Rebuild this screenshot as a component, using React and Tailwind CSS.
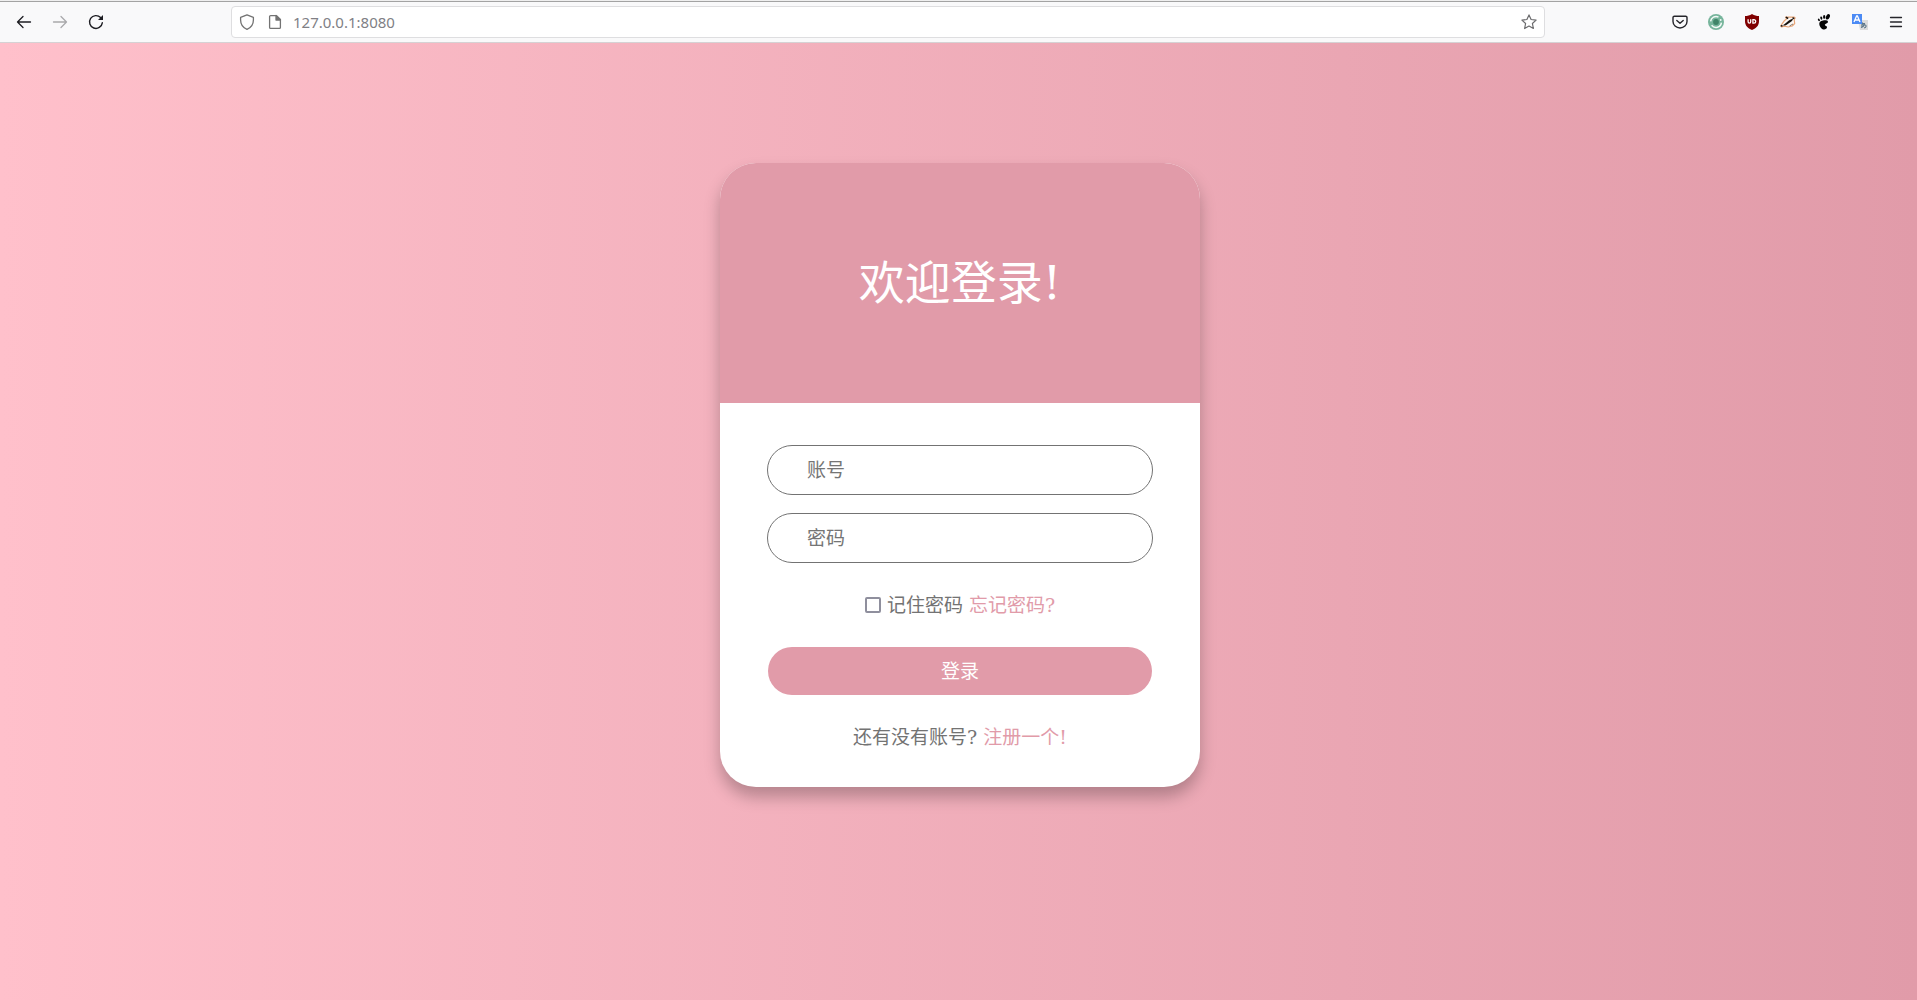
import React from "react";

const iconBtn = "flex size-9 items-center justify-center";

function BackIcon() {
  return (
    <svg width="16" height="16" viewBox="0 0 16 16" fill="none" stroke="#1d1d22" strokeWidth="1.3" strokeLinecap="round" strokeLinejoin="round">
      <path d="M14.5 8H1.500M7 2.500L1.500 8L7 13.500" />
    </svg>
  );
}

function ForwardIcon() {
  return (
    <svg width="16" height="16" viewBox="0 0 16 16" fill="none" stroke="#a9a9ab" strokeWidth="1.3" strokeLinecap="round" strokeLinejoin="round">
      <path d="M1.500 8H14.500M9 2.500L14.500 8L9 13.500" />
    </svg>
  );
}

function ReloadIcon() {
  return (
    <svg width="16" height="16" viewBox="0 0 16 16" fill="none" stroke="#1d1d22" strokeWidth="1.4" strokeLinecap="round">
      <path d="M14.300 8.800A6.400 6.400 0 1 1 12.600 3.600" />
      <path d="M15 1v5h-5z" fill="#1d1d22" stroke="none" />
    </svg>
  );
}

function ShieldIcon() {
  return (
    <svg width="16" height="16" viewBox="0 0 16 16" fill="none" stroke="#737373" strokeWidth="1.3" strokeLinejoin="round">
      <path d="M8 .8 1.600 3.300v2.600C1.600 10.500 4 13.600 8 15.300c4-1.700 6.400-4.800 6.400-9.400V3.300z" />
    </svg>
  );
}

function PageIcon() {
  return (
    <svg width="16" height="16" viewBox="0 0 16 16" fill="none" stroke="#737373" strokeWidth="1.3" strokeLinejoin="round">
      <path d="M9.500 1.600H3.600a1 1 0 0 0-1 1v10.800a1 1 0 0 0 1 1h8.800a1 1 0 0 0 1-1V5.500z" />
      <path d="M9 1.500V6h4.500z" fill="#737373" />
    </svg>
  );
}

function StarIcon() {
  return (
    <svg width="16" height="16" viewBox="0 0 16 16" fill="none" stroke="#6b6b6d" strokeWidth="1.2" strokeLinejoin="round">
      <path d="M8 .9l2.100 4.600 5 .6-3.700 3.400 1 5L8 12l-4.400 2.500 1-5L.9 6.100l5-.6z" />
    </svg>
  );
}

function PocketIcon() {
  return (
    <svg width="16" height="16" viewBox="0 0 16 16" fill="none" stroke="#26262b" strokeWidth="1.4" strokeLinecap="round" strokeLinejoin="round">
      <path d="M2.400 2.200h11.200a1.400 1.400 0 0 1 1.400 1.400v3.900a7 6.500 0 0 1-14 0V3.600a1.400 1.400 0 0 1 1.400-1.400z" />
      <path d="M4.800 6.400L8 9.300l3.200-2.900" />
    </svg>
  );
}

function OrbitIcon() {
  return (
    <svg width="16" height="16" viewBox="0 0 16 16">
      <circle cx="8" cy="8" r="8" fill="#77b59c" />
      <path d="M2.600 7.400A5.500 5.500 0 0 1 10.500 3.100M13.400 8.600A5.500 5.500 0 0 1 3.600 11.300" fill="none" stroke="#f4faf7" strokeWidth="1.500" />
      <circle cx="12.600" cy="6" r="1" fill="#f4faf7" />
      <circle cx="8" cy="8" r="4" fill="#77b59c" />
      <circle cx="8" cy="8" r="2.900" fill="#3f8468" />
    </svg>
  );
}

function BlockerIcon() {
  return (
    <svg width="16" height="16" viewBox="0 0 16 16" fill="none">
      <path d="M8 0c2.400 1.500 4.500 2 7 2v5c0 4.600-2.600 7.200-7 9C3.600 14.200 1 11.600 1 7V2c2.500 0 4.600-.5 7-2z" fill="#800000" />
      <path d="M4.100 5.300v2.500a1.300 1.300 0 0 0 2.600 0V5.300M8.900 5.700v3.400h1.100a1.700 1.700 0 0 0 0-3.400z" stroke="#fff" strokeWidth="1.300" />
    </svg>
  );
}

function BadgerIcon() {
  return (
    <svg width="16" height="16" viewBox="0 0 16 16" fill="none">
      <path d="M.8 11.800C2.500 9.500 3.500 6.500 6.500 5L5.700 3l3.600.2 4.700-.2 1.200 1-1 1.500.5 4-2.500 2.500-4 1-3.500-.8-3.200.6z" fill="#fbf8f5" stroke="#e9a678" strokeWidth="1.200" strokeLinejoin="round" />
      <path d="M2 11.300C4.500 10.800 6 8.700 8.500 6.700c1.700-1.200 3-1.700 4.500-1.700-.5 2-2 3-3.500 3.700-1.500.8-2.500 2.300-4.500 2.800z" fill="#17130f" />
      <path d="M5.800 3.200l2.400 1.300M12.500 3.800l1.800.8M.8 11.700l1.700.2" stroke="#17130f" strokeWidth="1.500" />
      <path d="M9.500 12c1-.3 2-1.500 3.500-2" stroke="#8a7b70" strokeWidth="1" />
    </svg>
  );
}

function FootIcon() {
  return (
    <svg width="16" height="16" viewBox="0 0 16 16" fill="#050505">
      <ellipse cx="11.900" cy="2.800" rx="1.800" ry="2.900" transform="rotate(25 11.900 2.800)" />
      <ellipse cx="8.200" cy="2.900" rx="1.150" ry="1.900" />
      <ellipse cx="5.300" cy="4.100" rx="1" ry="1.600" transform="rotate(-15 5.300 4.100)" />
      <ellipse cx="2.900" cy="5.900" rx=".9" ry="1.400" transform="rotate(-30 2.900 5.900)" />
      <path d="M3.300 9.500C3.500 7 7 6 9.700 6.200c2.300.2 3 1.700 1.600 2.800-1.300 1-2.600 1-2.500 2 .1 1 2.300.6 2.200 2.300-.1 1.500-1.800 2.500-3.500 2.200-2.400-.5-4.300-3.500-4.200-6z" />
    </svg>
  );
}

function TranslateIcon() {
  return (
    <svg width="16" height="16" viewBox="0 0 16 16" fill="none">
      <path d="M6 6h10v10H8z" fill="#dcdcdc" />
      <path d="M8 9.500h5M10 8v5.500M12.500 9c0 3-2 4.500-3.500 4.300M9.500 11.500c2-1.500 4.800-.8 4.600.8-.1 1-1 1.500-2 1.500" stroke="#60798b" strokeWidth="1.200" />
      <path d="M0 0h10v10H0z" fill="#4c8bf5" />
      <path d="M2 8l2.600-6h.8L8 8M3 6h4" stroke="#fff" strokeWidth="1.300" />
    </svg>
  );
}

function MenuIcon() {
  return (
    <svg width="16" height="16" viewBox="0 0 16 16" stroke="#26262b" strokeWidth="1.300" strokeLinecap="round">
      <path d="M2.500 3.500h11M2.500 8h11M2.500 12.500h11" />
    </svg>
  );
}

const extensions = [
  ["Pocket", PocketIcon],
  ["Orbit", OrbitIcon],
  ["Content blocker", BlockerIcon],
  ["Badger", BadgerIcon],
  ["GNOME", FootIcon],
  ["Translate", TranslateIcon],
];

function BrowserBar() {
  return (
    <header className="flex h-[42px] shrink-0 items-center border-t border-b border-t-[#a3a3a3] border-b-[#d5d2d4] bg-[#f9f9fa] pr-[3px] pl-1.5 font-['Noto_Sans',sans-serif]">
      <button aria-label="Back" className={iconBtn}><BackIcon /></button>
      <button aria-label="Forward" className={iconBtn}><ForwardIcon /></button>
      <button aria-label="Reload" className={iconBtn}><ReloadIcon /></button>
      <div className="mx-[117px] flex h-8 grow items-center rounded border border-[#dedee0] bg-white px-[7px]">
        <ShieldIcon />
        <span className="ml-3"><PageIcon /></span>
        <input aria-label="Address" defaultValue="127.0.0.1:8080" className="ml-2.5 min-w-0 grow bg-transparent text-[15px] text-[#808085] outline-none" />
        <button aria-label="Bookmark"><StarIcon /></button>
      </div>
      {extensions.map(([name, Icon]) => (
        <button key={name} aria-label={name} className={iconBtn}><Icon /></button>
      ))}
      <button aria-label="Menu" className={iconBtn}><MenuIcon /></button>
    </header>
  );
}

const field =
  "h-[50px] w-full rounded-full border border-[#737373] bg-white px-[39px] text-[19px] text-[#737373] placeholder:text-[#757575] outline-none";

export default function App() {
  return (
    <div className="flex min-h-screen flex-col bg-white font-['DejaVu_Serif','Noto_Sans_CJK_SC',serif]">
      <div className="h-px bg-[#efefef]" />
      <BrowserBar />
      <main className="flex grow flex-col items-center bg-linear-to-r from-[#ffc0cb] to-[#e19ba9] pt-[120px] pl-[3px]">
        <section className="w-[480px] overflow-hidden rounded-[36px] bg-white text-[19px] text-[#737373] shadow-[0_10px_16px_0_rgba(0,0,0,0.25)]">
          <div className="flex h-60 items-center justify-center bg-[#e19ba9]">
            <h1 className="text-[46px] leading-none text-white">欢迎登录!</h1>
          </div>
          <form className="flex flex-col items-center px-[47px] pt-[42px] pb-9" onSubmit={(e) => e.preventDefault()}>
            <input aria-label="账号" placeholder="账号" className={field} />
            <input aria-label="密码" type="password" placeholder="密码" className={field + " mt-[18px]"} />
            <div className="mt-7 flex h-7 items-center">
              <label className="flex items-center">
                <input type="checkbox" className="mr-1.5 size-4 appearance-none rounded-xs border-2 border-[#8f8f9d] bg-white" />
                记住密码
              </label>
              <a href="#forgot" className="ml-1.5 text-[#e19ba9]">忘记密码?</a>
            </div>
            <button className="mt-7 h-12 w-96 rounded-full bg-[#e19ba9] text-white">登录</button>
            <p className="mt-7 h-7 leading-7">
              还有没有账号? <a href="#register" className="text-[#e19ba9]">注册一个!</a>
            </p>
          </form>
        </section>
      </main>
    </div>
  );
}
